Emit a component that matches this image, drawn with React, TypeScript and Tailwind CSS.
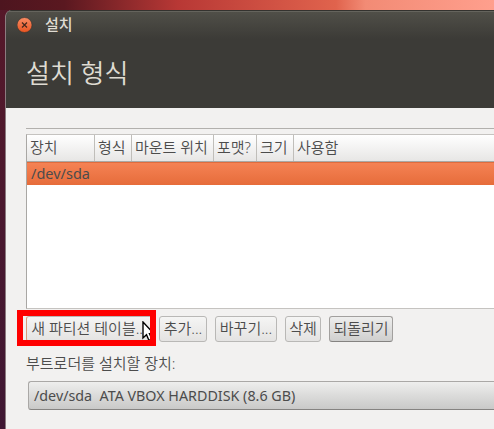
import type { ReactNode } from "react";

const columns = [
  { label: "장치", width: "w-[68px]" },
  { label: "형식", width: "w-[37px]" },
  { label: "마운트 위치", width: "w-[82px]" },
  { label: "포맷?", width: "w-[43px]" },
  { label: "크기", width: "w-[37px]" },
  { label: "사용함", width: "flex-1" },
];

function ToolButton({ children, className }: { children: ReactNode; className: string }) {
  return (
    <button
      className={`flex h-[26px] shrink-0 items-center justify-center whitespace-nowrap rounded-[3px] border pb-[2px] text-[15px] leading-none ${className}`}
    >
      {children}
    </button>
  );
}

const soft = "border-[#b9b8b6] bg-linear-to-b from-[#f5f5f4] to-[#e4e3e2]";

export default function App() {
  return (
    <div className="h-[429px] w-[494px] overflow-hidden bg-linear-to-b from-[#561829] to-[#3f1733] font-['Noto_Sans','Noto_Sans_CJK_KR',sans-serif] text-[#4c4c4c]">
      <div className="h-[10px] bg-[linear-gradient(to_right,#4d151f_0%,#5a1820_13%,#b83835_36%,#e0634d_68%,#f28b75_74%,#ff9f8d_100%)]" />
      <div className="ml-[5px] flex h-[419px] flex-col overflow-hidden rounded-tl-[7px] border-l border-[#8c7b80] bg-[#f2f1f0]">
        <header className="h-[98px] shrink-0 border-t border-[#34332f] bg-[#3c3b37]">
          <div className="flex h-[28px] items-center border-t border-[#65645d] bg-linear-to-b from-[#504f48] to-[#3c3b37] pl-[11px]">
            <svg width="16" height="16" viewBox="0 0 16 16" className="mt-[-1px] shrink-0">
              <defs>
                <linearGradient id="close" x2="0" y2="1">
                  <stop stopColor="#f98c64" />
                  <stop offset="1" stopColor="#e95420" />
                </linearGradient>
              </defs>
              <circle cx="7.5" cy="8" r="7.5" fill="url(#close)" stroke="#34332f" strokeWidth=".6" />
              <path d="M5 5.5l5 5M10 5.5l-5 5" stroke="#45281d" strokeWidth="1.2" />
            </svg>
            <span className="ml-[12px] mt-[-2px] text-[15px] font-medium leading-none text-[#dfdbd2]">설치</span>
          </div>
          <h1 className="ml-[20px] mt-[19px] whitespace-nowrap text-[26px] font-[350] leading-[30px] text-[#dfdbd2]">
            설치 형식
          </h1>
        </header>

        <main className="flex flex-col pl-[20px] pt-[20px]">
          <div className="h-px bg-[#b2b0ad]" />
          <div className="mt-[5px] flex h-[175px] flex-col border-y border-l border-y-[#c5c3c0] border-l-[#a9a7a4] bg-white">
            <div className="flex h-[27px] shrink-0 border-b border-[#aaa8a5] bg-linear-to-b from-white to-[#e7e6e5]">
              {columns.map((c) => (
                <div
                  key={c.label}
                  className={`${c.width} flex shrink-0 items-center whitespace-nowrap border-r border-[#c0beba] pb-[1px] pl-[3px] text-[15px] font-[350] leading-none last:border-r-0`}
                >
                  {c.label}
                </div>
              ))}
            </div>
            <div className="flex h-[23px] shrink-0 items-center border-t border-[#e06c3d] bg-linear-to-b from-[#f58254] to-[#e66c3a] pb-[2px] pl-[4px] text-[14.5px] leading-none">
              /dev/sda
            </div>
          </div>

          <div className="relative mt-[7px] flex h-[26px] font-[350]">
            <ToolButton
              className={`w-[128px] pr-[2px] ${soft} border-l-[#d99a7c]`}
            >
              새 파티션 테이블...
            </ToolButton>
            <ToolButton className={`ml-[5px] w-[48px] ${soft}`}>추가...</ToolButton>
            <ToolButton className={`ml-[8px] w-[62px] ${soft}`}>바꾸기...</ToolButton>
            <ToolButton className={`ml-[8px] w-[36px] ${soft}`}>삭제</ToolButton>
            <ToolButton className="ml-[8px] w-[64px] border-[#a2a09e] border-b-[#858381] bg-linear-to-b from-[#eeeeed] to-[#cfcfce]">
              되돌리기
            </ToolButton>
            <svg className="absolute left-[116px] top-[5px]" width="14" height="22" viewBox="0 0 14 22">
              <path
                d="M1 1v16l3.5-3.2L7 19.5l3-1.3-2.5-5.4h4.5z"
                fill="white"
                stroke="black"
                strokeWidth="1.4"
              />
            </svg>
            <div className="absolute left-[-9px] top-[-6px] h-[36px] w-[139px] border-6 border-[#ff0000]" />
          </div>

          <div className="mt-[13px] flex h-[18px] items-center whitespace-nowrap pb-[1px] text-[15px] font-[350] leading-none">
            부트로더를 설치할 장치:
          </div>
          <div className="ml-[2px] mt-[8px] flex h-[29px] items-center whitespace-pre rounded-l-[3px] border border-r-0 border-[#aaa8a6] border-b-[#858381] bg-linear-to-b from-[#eeeeed] to-[#c9c9c8] pl-[5px] pt-[1px] text-[14.3px] leading-none">
            {"/dev/sda  ATA VBOX HARDDISK (8.6 GB)"}
          </div>
        </main>
      </div>
    </div>
  );
}
